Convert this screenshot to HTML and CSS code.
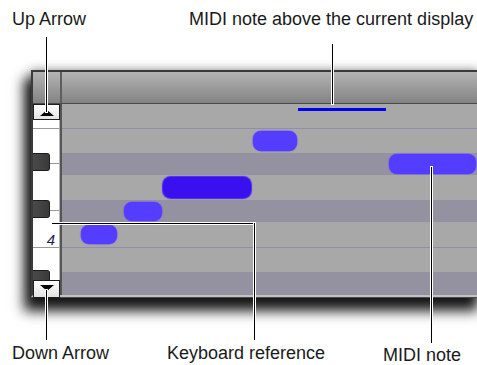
FILE: index.html
```html
<!DOCTYPE html>
<html lang="en">
<head>
<meta charset="utf-8">
<title>MIDI editor keyboard reference</title>
<link rel="stylesheet" href="styles.css">
</head>
<body>
<div class="figure">
  <div class="labels-top">
    <span class="lt-up">Up Arrow</span>
    <span class="lt-above">MIDI note above the current display</span>
  </div>

  <div class="window">
    <div class="header">
      <div class="header-key"></div>
      <div class="header-main"></div>
    </div>
    <div class="roll">
      <div class="keys">
        <div class="scroll-btn btn-up"><span class="tri-up"></span></div>
        <div class="white-keys">
          <div class="wk wk-f"></div>
          <div class="wk wk-e"></div>
          <div class="wk wk-d"></div>
          <div class="wk wk-c"><span class="octave">4</span></div>
          <div class="wk wk-b"></div>
          <div class="bk bk-ds"></div>
          <div class="bk bk-cs"></div>
          <div class="bk bk-as"></div>
        </div>
        <div class="scroll-btn btn-down"><span class="tri-down"></span></div>
      </div>
      <div class="grid">
        <div class="row light sep row-top"><div class="bar" style="margin-left:236px;width:88px"></div></div>
        <div class="row light h24"><div class="note" style="margin-left:191px;width:44px"></div></div>
        <div class="row dark h22"><div class="note" style="margin-left:327px;width:87px"></div></div>
        <div class="row light h25"><div class="note deep" style="margin-left:101px;width:88px"></div></div>
        <div class="row dark h22"><div class="note small" style="margin-left:62px;width:38px"></div></div>
        <div class="row light sep h26"><div class="note small" style="margin-left:19px;width:36px"></div></div>
        <div class="row light h24"></div>
        <div class="row dark h23"></div>
      </div>
    </div>
  </div>

  <div class="labels-bottom">
    <span class="lb-down">Down Arrow</span>
    <span class="lb-kbd">Keyboard reference</span>
    <span class="lb-note">MIDI note</span>
  </div>

  <div class="callout co-up"></div>
  <div class="callout co-above"></div>
  <div class="callout co-down"></div>
  <div class="callout co-kbd-h"></div>
  <div class="callout co-kbd-v"></div>
  <div class="callout co-note"></div>
</div>
</body>
</html>
```

FILE: styles.css
```css
html, body {
  margin: 0;
  padding: 0;
  background: #fff;
}

body {
  font-family: "Liberation Sans", Arial, sans-serif;
  color: #1a1a1a;
  overflow: hidden;
}

.figure {
  position: relative;
  width: 477px;
  height: 365px;
  overflow: hidden;
}

/* ---------- labels ---------- */
.labels-top {
  display: flex;
  height: 70px;
  box-sizing: border-box;
  padding-top: 10px;
  font-size: 18px;
  line-height: 18px;
  white-space: nowrap;
}

.lt-up {
  margin-left: 12px;
  width: 177px;
}

.labels-bottom {
  display: flex;
  align-items: flex-start;
  margin-top: 47px;
  font-size: 18px;
  line-height: 18px;
  white-space: nowrap;
}

.lb-down {
  margin-left: 12px;
  width: 155px;
}

.lb-kbd {
  width: 216px;
}

.lb-note {
  margin-top: 2px;
}

/* ---------- window ---------- */
.window {
  margin-left: 31px;
  width: 446px;
  border-top: 2px solid #3a3a3a;
  border-left: 2px solid #3a3a3a;
  border-bottom: 2px solid #c2c2c2;
  box-shadow: 0 1px 0 #4a4a4a, -4px 11px 12px 3px rgba(0, 0, 0, 0.9), 0 0 10px rgba(0, 0, 0, 0.35);
  background: #a8a8a8;
}

.header {
  display: flex;
  height: 31px;
  border-bottom: 1px solid #4a4a4a;
  background: linear-gradient(#b4b4b4, #9e9e9e 45%, #838383);
}

.header-key {
  width: 27px;
  border-right: 2px solid #5e5e5e;
}

.header-main {
  flex: 1;
}

.roll {
  display: flex;
  height: 191px;
}

/* ---------- keyboard ---------- */
.keys {
  width: 27px;
  border-right: 2px solid #555;
  background: #fff;
  display: flex;
  flex-direction: column;
}

.scroll-btn {
  position: relative;
  z-index: 1;
  box-sizing: border-box;
  border: 1px solid #1e1e1e;
  background: linear-gradient(#ffffff, #e2e2e2);
  display: flex;
  align-items: center;
  justify-content: center;
}

.btn-up {
  height: 16px;
}

.btn-down {
  height: 18px;
  margin-bottom: -3px;
}

.tri-up {
  width: 0;
  height: 0;
  border-left: 7px solid transparent;
  border-right: 7px solid transparent;
  border-bottom: 6px solid #000;
  margin-top: 1px;
}

.tri-down {
  width: 0;
  height: 0;
  border-left: 7px solid transparent;
  border-right: 7px solid transparent;
  border-top: 6px solid #000;
  margin-top: -2px;
}

.white-keys {
  position: relative;
  flex: 1;
  display: flex;
  flex-direction: column;
}

.wk {
  box-sizing: border-box;
  border-right: 1px solid #b8b8b8;
  border-bottom: 1px solid #9a9a9a;
}

.wk-f { height: 9px; }
.wk-e { height: 35px; }
.wk-d { height: 47px; }
.wk-c {
  height: 37px;
  display: flex;
  justify-content: flex-end;
  align-items: flex-end;
  padding-right: 4px;
}
.wk-b {
  flex: 1;
  border-bottom: none;
}

.octave {
  font-size: 15px;
  line-height: 15px;
  font-style: italic;
  color: #23234a;
}

.bk {
  position: absolute;
  left: 0;
  width: 17px;
  box-sizing: border-box;
  background: linear-gradient(90deg, #4a4a4a, #3a3a3a);
  border: 1px solid #1c1c1c;
  border-left: none;
  border-radius: 0 3px 3px 0;
}

.bk-ds { top: 33px; height: 18px; }
.bk-cs { top: 80px; height: 18px; }
.bk-as { top: 150px; height: 14px; }

/* ---------- note grid ---------- */
.grid {
  flex: 1;
  display: flex;
  flex-direction: column;
  overflow: hidden;
}

.row {
  display: flex;
  align-items: center;
  box-sizing: border-box;
  flex: none;
}

.light { background: #a8a8a8; }
.dark { background: #9491a1; }
.sep { border-bottom: 1px solid #918eab; }

.row-top {
  height: 25px;
  align-items: flex-start;
}

.h22 { height: 22px; }
.h23 { height: 23px; }
.h24 { height: 24px; }
.h25 { height: 25px; }
.h26 { height: 26px; }

.bar {
  margin-top: 4px;
  height: 3px;
  background: #0000f2;
}

.note {
  height: 20px;
  border-radius: 8px;
  background: #553dff;
  box-shadow: 0 0 1px 0.5px #6a58ff;
  flex: none;
}

.note.deep {
  height: 21px;
  background: #3a10f0;
  box-shadow: 0 0 1px 0.5px #4a2af0;
}

.note.small {
  height: 19px;
}

/* ---------- callout lines ---------- */
.callout {
  position: absolute;
  background: #000;
  box-shadow: 0 0 0 1px #fff;
  z-index: 2;
}

.co-up { left: 46px; top: 37px; width: 1px; height: 75px; }
.co-above { left: 332px; top: 44px; width: 1px; height: 60px; }
.co-down { left: 46px; top: 290px; width: 1px; height: 50px; }
.co-kbd-h { left: 52px; top: 223px; width: 203px; height: 1px; }
.co-kbd-v { left: 254px; top: 223px; width: 1px; height: 117px; }
.co-note { left: 431px; top: 167px; width: 1px; height: 176px; }
```
